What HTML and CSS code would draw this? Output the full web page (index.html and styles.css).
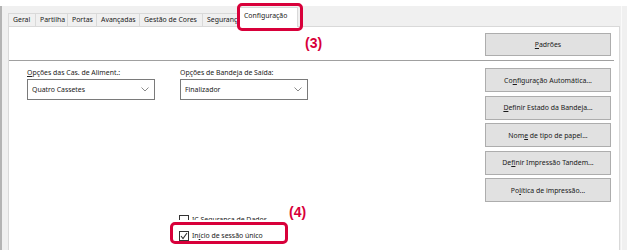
FILE: index.html
```html
<!DOCTYPE html>
<html>
<head>
    <title>Configuração</title>
    <link rel="stylesheet" href="styles.css">
</head>
<body>
<div class="window">
    <div class="tabs">
        <div class="tab">Geral</div>
        <div class="tab">Partilha</div>
        <div class="tab">Portas</div>
        <div class="tab">Avançadas</div>
        <div class="tab">Gestão de Cores</div>
        <div class="tab">Segurança</div>
        <div class="tab active">Configuração</div>
    </div>

    <div class="panel">
        <div class="panel-top">
            <button class="btn"><u>P</u>adrões</button>
        </div>
        <div class="rule"></div>

        <div class="panel-main">
            <div class="options">
                <div class="selects">
                    <div class="field">
                        <label><u>O</u>pções das Cas. de Aliment.:</label>
                        <div class="select">
                            <span>Quatro Cassetes</span>
                            <svg width="8" height="5" viewBox="0 0 8 5"><polyline points="0.5,0.5 4,4 7.5,0.5" fill="none" stroke="#8a8a8a" stroke-width="1"/></svg>
                        </div>
                    </div>
                    <div class="field">
                        <label>Op<u>ç</u>ões de Bandeja de Saída:</label>
                        <div class="select">
                            <span>Finalizador</span>
                            <svg width="8" height="5" viewBox="0 0 8 5"><polyline points="0.5,0.5 4,4 7.5,0.5" fill="none" stroke="#8a8a8a" stroke-width="1"/></svg>
                        </div>
                    </div>
                </div>

                <div class="checks">
                    <div class="check-cut">
                        <div class="check"><span class="box"></span><span>IC Segurança de Dados</span></div>
                    </div>
                    <div class="check"><span class="box checked"><svg width="8" height="8" viewBox="0 0 8 8"><polyline points="1,4 3,6.5 7,1" fill="none" stroke="#333" stroke-width="1.1"/></svg></span><span>In<u>í</u>cio de sessão único</span></div>
                </div>
            </div>

            <div class="actions">
                <button class="btn">Co<u>n</u>figuração Automática...</button>
                <button class="btn"><u>D</u>efinir Estado da Bandeja...</button>
                <button class="btn">Nom<u>e</u> de tipo de papel...</button>
                <button class="btn">De<u>f</u>inir Impressão Tandem...</button>
                <button class="btn">Po<u>l</u>ítica de impressão...</button>
            </div>
        </div>
    </div>

    <!-- annotation marks over the dialog -->
    <div class="mark mark-tab"></div>
    <div class="step step-3">(3)</div>
    <div class="mark mark-check"></div>
    <div class="step step-4">(4)</div>
</div>
</body>
</html>
```

FILE: styles.css
```css
* {
    box-sizing: border-box;
}

html, body {
    margin: 0;
    padding: 0;
    background: #fff;
    font-family: "Noto Sans", "Open Sans", Arial, sans-serif;
    font-size: 6.9px;
    color: #1a1a1a;
}

.window {
    position: relative;
    width: 627px;
    height: 250px;
    padding-top: 6px;
    overflow: hidden;
    background: #fff;
}

.window:before {
    content: "";
    position: absolute;
    top: 6px;
    left: 0;
    right: 0;
    bottom: 0;
    background: #f0f0f0;
    border-left: 2px solid #b4b4b4;
}

.window:after {
    content: "";
    position: absolute;
    top: 6px;
    right: 5px;
    bottom: 0;
    width: 1px;
    background: #fafafa;
}

.tabs {
    position: relative;
    display: flex;
    align-items: flex-end;
    height: 20px;
    margin-left: 8px;
    z-index: 2;
}

.tab {
    height: 13px;
    line-height: 12px;
    padding: 0 4px;
    border: 1px solid #d9d9d9;
    border-right: none;
    border-bottom: none;
    background: #f0f0f0;
    white-space: nowrap;
    overflow: hidden;
}

.tab:nth-child(1) { width: 27px; }
.tab:nth-child(2) { width: 32px; }
.tab:nth-child(3) { width: 29px; }
.tab:nth-child(4) { width: 43px; }
.tab:nth-child(5) { width: 63px; }
.tab:nth-child(6) { width: 36px; }

.tab.active {
    width: 60px;
    height: 20px;
    margin-bottom: -1px;
    line-height: 16px;
    padding: 0 5px;
    background: #fff;
    border-right: 1px solid #d9d9d9;
}

.panel {
    position: relative;
    width: 612px;
    height: 230px;
    margin-left: 8px;
    border: 1px solid #d9d9d9;
    border-bottom: none;
    background: #fff;
    z-index: 1;
}

.panel-top {
    display: flex;
    justify-content: flex-end;
    padding: 6px 8px 0 0;
}

.btn {
    display: block;
    width: 126px;
    height: 23px;
    padding: 0;
    border: 1px solid #adadad;
    background: #e1e1e1;
    font-family: inherit;
    font-size: 6.9px;
    color: #1a1a1a;
    text-align: center;
}

.rule {
    height: 1px;
    margin: 4px 5px 0 0;
    background: #a0a0a0;
}

.panel-main {
    display: flex;
    justify-content: space-between;
    padding: 7px 8px 0 18px;
}

.options {
    display: flex;
    flex-direction: column;
}

.selects {
    display: flex;
    gap: 25px;
}

.field {
    display: flex;
    flex-direction: column;
    width: 128px;
}

.field label {
    height: 10px;
    line-height: 10px;
    color: #222;
}

.select {
    display: flex;
    align-items: center;
    justify-content: space-between;
    height: 21px;
    margin-top: 1px;
    padding: 0 5px 0 4px;
    border: 1px solid #7a7a7a;
    background: #fff;
}

.checks {
    margin-top: 114px;
    margin-left: 152px;
}

.check-cut {
    height: 6px;
    overflow: hidden;
}

.check {
    display: flex;
    align-items: center;
    gap: 3px;
    height: 11px;
    line-height: 11px;
    white-space: nowrap;
}

.check-cut + .check {
    margin-top: 10px;
}

.box {
    display: flex;
    align-items: center;
    justify-content: center;
    width: 10px;
    height: 10px;
    border: 1px solid #333;
    background: #fff;
}

.actions {
    display: flex;
    flex-direction: column;
    gap: 3.5px;
}

.actions .btn {
    height: 24px;
}

.mark {
    position: absolute;
    border: 3px solid #d8003a;
    border-radius: 5px;
    z-index: 3;
}

.mark-tab {
    left: 237px;
    top: 3px;
    width: 66px;
    height: 28px;
}

.mark-check {
    left: 170px;
    top: 222px;
    width: 118px;
    height: 22px;
}

.step {
    position: absolute;
    font-family: "Liberation Sans", Arial, sans-serif;
    font-size: 14px;
    font-weight: bold;
    color: #d8003a;
    line-height: 16px;
    z-index: 3;
}

.step-3 {
    left: 305px;
    top: 35px;
}

.step-4 {
    left: 289px;
    top: 204px;
}
```
